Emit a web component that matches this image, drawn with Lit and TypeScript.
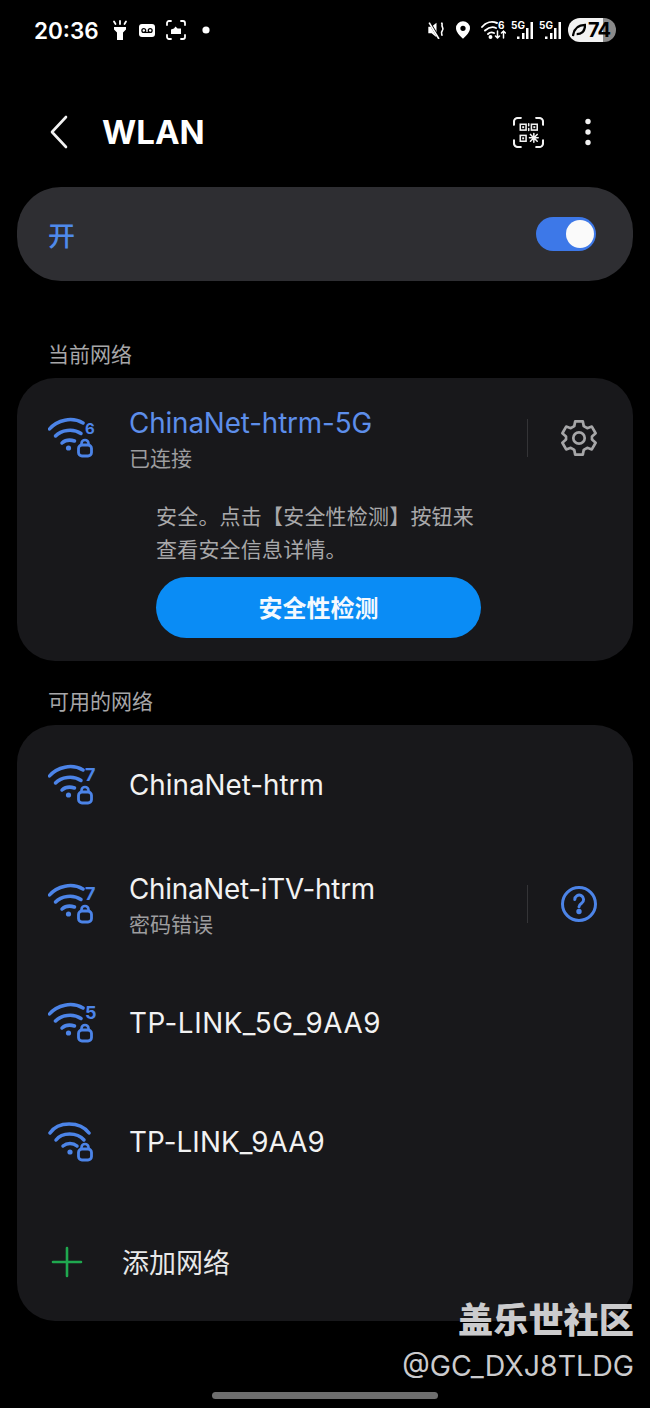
import { LitElement, html, css, svg } from 'lit';
import { customElement } from 'lit/decorators.js';

const BLUE = '#4c84e8';

// wifi arcs with a lock, and the wifi generation digit when there is one
function wifiIcon(gen?: string) {
    const digitSize = gen === '6' ? 15 : 18;
    return html`<svg width="48" height="44" viewBox="0 0 48 44" fill="none" stroke="${BLUE}" stroke-linecap="round" stroke-width="3.5">
        ${gen
            ? svg`<path d="M1.500 13C9 4 24 0.500 35 7"/>
                <path d="M7.500 20C13 14 25 12 33 17.500"/>
                <path d="M14 27C18 23.500 22 23.500 26.500 25"/>
                <circle cx="20.500" cy="32" r="2.600" fill="${BLUE}" stroke="none"/>
                <text x="37" y="17.500" class="gen" font-size="${digitSize}" fill="${BLUE}" stroke="none">${gen}</text>`
            : svg`<path d="M2 13C10 1 32 1 41 13"/>
                <path d="M8 20C14 12 29 12 36 20"/>
                <path d="M15 26C19 22.500 25 22.500 29 26"/>
                <circle cx="22" cy="32" r="2.600" fill="${BLUE}" stroke="none"/>`}
        <rect x="30.500" y="29" width="13" height="11" rx="3.500" stroke-width="2.800"/>
        <path d="M33.500 28.500V27.500a3.500 3.500 0 0 1 7 0v1" stroke-width="2.600"/>
    </svg>`;
}

function signalIcon() {
    return html`<svg class="raised" width="22" height="22" viewBox="0 -4 22 22" fill="#fff">
        <text x="0" y="7.500" class="sig">5G</text>
        <rect x="6" y="15.500" width="2.500" height="2.500"/>
        <rect x="11" y="12" width="2.500" height="6"/>
        <rect x="15" y="7" width="2.500" height="11"/>
        <rect x="19.500" y="1" width="2.500" height="17"/>
    </svg>`;
}

@customElement('app-root')
export class AppRoot extends LitElement {
    static styles = css`
        :host {
            display: block;
            position: relative;
            width: 650px;
            height: 1408px;
            background: #000;
            color: #fff;
            overflow: hidden;
            font-family: Inter, "Noto Sans CJK SC", sans-serif;
        }
        .status {
            height: 60px;
            box-sizing: border-box;
            padding: 0 34px;
            display: flex;
            align-items: center;
            font-weight: 600;
        }
        .time {
            font-size: 22.5px;
            width: 78px;
        }
        .status-left {
            display: flex;
            align-items: center;
            gap: 11px;
        }
        .status-left .dot {
            margin-left: 4px;
        }
        .status-right {
            margin-left: auto;
            display: flex;
            align-items: center;
            gap: 11px;
        }
        .signals {
            display: flex;
            gap: 6px;
            margin-left: -6px;
            margin-right: -4px;
        }
        .raised {
            margin-top: -4px;
        }
        .battery {
            width: 48px;
            height: 24px;
            border-radius: 12px;
            background: linear-gradient(90deg, #f2f2f2 0 35px, #8a8a8a 35px);
            color: #000;
            font-size: 20px;
            font-weight: 700;
            letter-spacing: -1px;
            display: flex;
            align-items: center;
            padding-left: 4px;
            box-sizing: border-box;
            gap: 2px;
        }
        .header {
            height: 72px;
            margin-top: 36px;
            padding: 0 59px 0 48px;
            display: flex;
            align-items: center;
        }
        .header h1 {
            margin: 0 0 0 30px;
            font-size: 33px;
            font-weight: 700;
        }
        .header-actions {
            margin-left: auto;
            display: flex;
            align-items: center;
            gap: 41px;
        }
        .card {
            margin: 0 17px;
            background: #18181b;
            border-radius: 38px;
        }
        .switch-card {
            margin-top: 19px;
            height: 94px;
            background: #2e2e32;
            border-radius: 44px;
            padding: 0 37px 0 31px;
            display: flex;
            align-items: center;
            justify-content: space-between;
            color: #4f8aea;
            font-size: 27px;
            font-weight: 500;
        }
        .toggle {
            width: 60px;
            height: 34px;
            border-radius: 17px;
            background: #3d78e8;
            position: relative;
        }
        .toggle::after {
            content: "";
            position: absolute;
            right: 2px;
            top: 3px;
            width: 28px;
            height: 28px;
            border-radius: 50%;
            background: #fafafa;
        }
        .section {
            height: 97px;
            box-sizing: border-box;
            padding: 0 48px 10px;
            display: flex;
            align-items: flex-end;
            font-size: 21px;
            color: #a6a6a8;
        }
        .section.second {
            height: 64px;
        }
        .row {
            display: flex;
            align-items: center;
            padding: 0 35px 0 31px;
        }
        .row .text {
            margin-left: 33px;
            flex: 1;
        }
        .row .text.two {
            margin-top: 3px;
        }
        .name {
            font-size: 27.8px;
            line-height: 36px;
            color: #f2f2f2;
        }
        .name.active {
            color: #5d8eea;
            letter-spacing: -0.13px;
        }
        .name.itv {
            letter-spacing: -0.24px;
        }
        .name.tp {
            letter-spacing: 0.1px;
        }
        .name.tp-wide {
            letter-spacing: 0.55px;
        }
        .sub {
            font-size: 21px;
            line-height: 30px;
            color: #9d9d9f;
            margin-top: 3px;
        }
        .divider {
            width: 1px;
            height: 38px;
            background: #343437;
            margin-right: 32px;
        }
        .current {
            height: 283px;
            box-sizing: border-box;
            padding-top: 28px;
        }
        .current .row {
            height: 64px;
        }
        .note {
            margin: 30px 0 0 139px;
            font-size: 21px;
            line-height: 33px;
            color: #a8a8aa;
            letter-spacing: 0.2px;
        }
        .check {
            margin: 11px 0 0 139px;
            width: 325px;
            height: 61px;
            box-sizing: border-box;
            padding-bottom: 2px;
            border-radius: 31px;
            background: #0a8cf5;
            display: flex;
            align-items: center;
            justify-content: center;
            font-size: 24px;
            font-weight: 700;
            color: #f4f9fe;
        }
        .available {
            height: 596px;
        }
        .available .row {
            height: 119px;
        }
        .add {
            display: flex;
            align-items: center;
            padding: 0 0 3px 34px;
            height: 124px;
            box-sizing: border-box;
        }
        .add span {
            margin-left: 39px;
            font-size: 27px;
            color: #e8e8e8;
        }
        .home-bar {
            position: absolute;
            left: 212px;
            top: 1392px;
            width: 226px;
            height: 7px;
            border-radius: 4px;
            background: #6e6e6e;
        }
        .watermark {
            position: absolute;
            right: 16px;
            top: 1300px;
            text-align: right;
            color: #cbcbcd;
        }
        .wm-title {
            font-size: 35.2px;
            line-height: 40px;
            font-weight: 900;
        }
        .wm-user {
            font-size: 28.5px;
            line-height: 40px;
            margin-top: 6px;
        }
        .gen {
            font-family: Inter, sans-serif;
            font-weight: 700;
        }
        .sig {
            font: 700 10px Inter, sans-serif;
        }
        svg {
            display: block;
            flex: none;
        }
    `;

    render() {
        return html`
            <div class="status">
                <span class="time">20:36</span>
                <div class="status-left">
                    <svg width="16" height="20" viewBox="0 0 16 20" fill="#fff">
                        <path d="M2 7h12v2.500l-3 3V20H5v-7.500l-3-3z"/>
                        <path d="M8 1v3M2 1.500l1.500 2.500M14 1.500L12.500 4" stroke="#fff" stroke-width="1.800" stroke-linecap="round"/>
                    </svg>
                    <svg width="16" height="13" viewBox="0 0 16 13">
                        <rect width="16" height="13" rx="3" fill="#fff"/>
                        <circle cx="4.800" cy="6.500" r="1.900" fill="none" stroke="#000" stroke-width="1.300"/>
                        <circle cx="11.200" cy="6.500" r="1.900" fill="none" stroke="#000" stroke-width="1.300"/>
                        <path d="M4.800 8.400h6.400" stroke="#000" stroke-width="1.300"/>
                    </svg>
                    <svg width="20" height="20" viewBox="0 0 20 20" fill="none" stroke="#fff" stroke-width="1.800" stroke-linecap="round">
                        <path d="M1 5V3a2 2 0 0 1 2-2h2M15 1h2a2 2 0 0 1 2 2v2M19 15v2a2 2 0 0 1-2 2h-2M5 19H3a2 2 0 0 1-2-2v-2"/>
                        <path d="M5 14V9.500l3-1 1.500-2 2 2H15V14z" fill="#fff" stroke="none"/>
                    </svg>
                    <svg class="dot" width="10" height="10" viewBox="0 0 10 10"><circle cx="5" cy="5" r="3.600" fill="#fff"/></svg>
                </div>
                <div class="status-right">
                    <svg width="17" height="18" viewBox="0 0 20 22" fill="#fff">
                        <path d="M0 7h4l6-5v18l-6-5H0z"/>
                        <path d="M1 1l12 20" stroke="#000" stroke-width="3"/>
                        <path d="M1 2l12 20" stroke="#fff" stroke-width="2"/>
                        <path d="M16 2c2 2 0 3 1 5s2 3 0 5-1 3 0 6" fill="none" stroke="#fff" stroke-width="2"/>
                    </svg>
                    <svg width="14" height="18" viewBox="0 0 16 20">
                        <path fill-rule="evenodd" fill="#fff" d="M8 0a8 8 0 0 1 8 8c0 4-4 8.500-8 12C4 16.500 0 12 0 8a8 8 0 0 1 8-8zm0 5a3 3 0 1 0 0 6 3 3 0 0 0 0-6z"/>
                    </svg>
                    <svg class="raised" width="25" height="22" viewBox="0 -4 25 22" fill="none" stroke="#fff" stroke-width="1.900" stroke-linecap="round">
                        <path d="M1 6C5 1 11 0 16 2"/>
                        <path d="M4 9.500C8 6 12 5.500 15 7"/>
                        <path d="M7 13c2-2 4-2 6-1"/>
                        <circle cx="9.500" cy="16" r="1" fill="#fff"/>
                        <path d="M16.500 10v7M14.500 15l2 2 2-2M22.500 17v-7M20.500 12l2-2 2 2" stroke-width="1.500"/>
                        <text x="17" y="8" class="sig" fill="#fff" stroke="none">6</text>
                    </svg>
                    <div class="signals">${signalIcon()}${signalIcon()}</div>
                    <div class="battery">
                        <svg width="14" height="14" viewBox="0 0 15 15" fill="none" stroke="#000" stroke-width="2.400"><path d="M1 14C2 6 7 2 14 2c0 6-3 10-9 10"/></svg>
                        74
                    </div>
                </div>
            </div>

            <div class="header">
                <svg width="24" height="36" viewBox="0 0 24 36" fill="none" stroke="#f2f2f2" stroke-width="2.600" stroke-linecap="round" stroke-linejoin="round">
                    <path d="M18 3L4 18l14 15"/>
                </svg>
                <h1>WLAN</h1>
                <div class="header-actions">
                    <svg width="31" height="31" viewBox="0 0 32 32" fill="none" stroke="#f2f2f2" stroke-width="2.200" stroke-linecap="round">
                        <path d="M1 8V5a4 4 0 0 1 4-4h3M24 1h3a4 4 0 0 1 4 4v3M31 24v3a4 4 0 0 1-4 4h-3M8 31H5a4 4 0 0 1-4-4v-3"/>
                        <g stroke-width="1.600">
                            <rect x="7.500" y="7.500" width="6" height="6"/>
                            <rect x="19" y="7.500" width="6" height="6"/>
                            <rect x="7.500" y="19" width="6" height="6"/>
                            <path d="M16.200 7v2M16.200 12v2M18 18l7 7M25 18l-7 7M21.500 17v9M17 21.500h9"/>
                        </g>
                        <g fill="#f2f2f2" stroke="none">
                            <rect x="9.500" y="9.500" width="2" height="2"/>
                            <rect x="21" y="9.500" width="2" height="2"/>
                            <rect x="9.500" y="21" width="2" height="2"/>
                        </g>
                    </svg>
                    <svg width="6" height="28" viewBox="0 0 6 28" fill="#f2f2f2">
                        <circle cx="3" cy="3.500" r="2.700"/><circle cx="3" cy="14" r="2.700"/><circle cx="3" cy="24.500" r="2.700"/>
                    </svg>
                </div>
            </div>

            <div class="card switch-card"><span>开</span><div class="toggle"></div></div>

            <div class="section">当前网络</div>
            <div class="card current">
                <div class="row">
                    ${wifiIcon('6')}
                    <div class="text two">
                        <div class="name active">ChinaNet-htrm-5G</div>
                        <div class="sub">已连接</div>
                    </div>
                    <div class="divider"></div>
                    <svg width="38" height="38" viewBox="0 0 24 24" fill="none" stroke="#a6a6a8" stroke-width="1.700" stroke-linejoin="round">
                        <path d="M9.600 1.500h4.800l.6 3 2.200 1.300 2.900-1 2.400 4.200-2.300 2v2l2.300 2-2.400 4.200-2.900-1-2.200 1.300-.6 3H9.600l-.6-3-2.200-1.300-2.900 1L1.500 15l2.300-2v-2l-2.300-2 2.400-4.200 2.900 1L9 4.500z"/>
                        <circle cx="12" cy="12" r="3.600"/>
                    </svg>
                </div>
                <div class="note">安全。点击【安全性检测】按钮来<br />查看安全信息详情。</div>
                <div class="check">安全性检测</div>
            </div>

            <div class="section second">可用的网络</div>
            <div class="card available">
                <div class="row">
                    ${wifiIcon('7')}
                    <div class="text"><div class="name">ChinaNet-htrm</div></div>
                </div>
                <div class="row">
                    ${wifiIcon('7')}
                    <div class="text two">
                        <div class="name itv">ChinaNet-iTV-htrm</div>
                        <div class="sub">密码错误</div>
                    </div>
                    <div class="divider"></div>
                    <svg width="38" height="38" viewBox="0 0 38 38" fill="none" stroke="${BLUE}" stroke-width="3" stroke-linecap="round">
                        <circle cx="19" cy="19" r="16.500"/>
                        <path d="M14.800 14.500a4.400 4.400 0 1 1 6.800 3.700c-1.800 1.200-2.600 2-2.600 3.600"/>
                        <circle cx="19" cy="26.500" r="1.200" fill="${BLUE}"/>
                    </svg>
                </div>
                <div class="row">
                    ${wifiIcon('5')}
                    <div class="text"><div class="name tp-wide">TP-LINK_5G_9AA9</div></div>
                </div>
                <div class="row">
                    ${wifiIcon()}
                    <div class="text"><div class="name tp">TP-LINK_9AA9</div></div>
                </div>
                <div class="add">
                    <svg width="32" height="32" viewBox="0 0 32 32" stroke="#1fa84f" stroke-width="2.600" stroke-linecap="round">
                        <path d="M16 2v28M2 16h28"/>
                    </svg>
                    <span>添加网络</span>
                </div>
            </div>

            <div class="home-bar"></div>
            <div class="watermark">
                <div class="wm-title">盖乐世社区</div>
                <div class="wm-user">@GC_DXJ8TLDG</div>
            </div>
        `;
    }
}
